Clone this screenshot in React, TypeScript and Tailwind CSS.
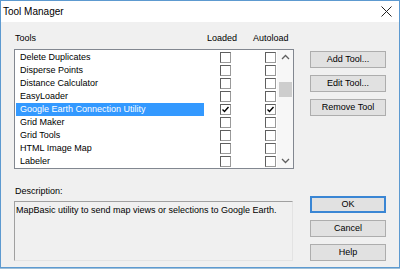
import React from "react"

// Lista de ferramentas do diálogo
const TOOLS = [
  { name: "Delete Duplicates", loaded: false, auto: false },
  { name: "Disperse Points", loaded: false, auto: false },
  { name: "Distance Calculator", loaded: false, auto: false },
  { name: "EasyLoader", loaded: false, auto: false },
  { name: "Google Earth Connection Utility", loaded: true, auto: true, selected: true },
  { name: "Grid Maker", loaded: false, auto: false },
  { name: "Grid Tools", loaded: false, auto: false },
  { name: "HTML Image Map", loaded: false, auto: false },
  { name: "Labeler", loaded: false, auto: false },
]

function CheckBox({ checked }: { checked: boolean }) {
  return (
    <div className="flex h-[11px] w-[11px] items-center justify-center border border-t-[#5f5f5f] border-l-[#5f5f5f] border-r-[#9a9a9a] border-b-[#9a9a9a] bg-white">
      {checked && (
        <svg width="9" height="9" viewBox="0 0 9 9" fill="none">
          <path d="M1.5 4.5 L3.5 6.5 L7.5 2" stroke="#000" strokeWidth="1.4" />
        </svg>
      )}
    </div>
  )
}

function Button({ label, primary }: { label: string; primary?: boolean }) {
  return (
    <div
      className={`flex h-[17px] w-[76px] items-center justify-center bg-[#e1e1e1] text-[9px] text-black ${
        primary ? "border-2 border-[#3a86d4]" : "border border-[#adadad]"
      }`}
    >
      {label}
    </div>
  )
}

export default function App() {
  return (
    <div
      className="h-[269px] w-[400px] bg-[#9fbfd8]"
      style={{ fontFamily: '"Liberation Sans", Arial, sans-serif' }}
    >
      <div className="flex h-[268px] w-[400px] flex-col border border-[#5d9ad0]">
        {/* Barra de título */}
        <div className="flex h-[21px] items-center justify-between bg-white pl-[2px] pr-[7px]">
          <span className="text-[10px] text-black">Tool Manager</span>
          <svg width="11" height="11" viewBox="0 0 11 11" fill="none">
            <path d="M0.5 0.5 L10.5 10.5 M10.5 0.5 L0.5 10.5" stroke="#222" strokeWidth="1" />
          </svg>
        </div>

        {/* Corpo */}
        <div className="flex flex-1 bg-[#f0f0f0] pl-[13px] text-[9px] text-black">
          <div className="flex w-[280px] flex-col">
            <div className="mt-[11px] flex h-[11px] items-center leading-[11px]">
              <span className="ml-[1px] w-[192px]">Tools</span>
              <span className="w-[46px]">Loaded</span>
              <span>Autoload</span>
            </div>

            {/* Lista */}
            <div className="mt-[5px] flex h-[120px] w-[280px] border border-[#828790] bg-white">
              <div className="flex flex-1 flex-col overflow-hidden pt-[1px]">
                {TOOLS.map((t) => (
                  <div key={t.name} className="flex h-[13px] shrink-0 items-center">
                    <div
                      className={`ml-[1px] flex h-[13px] w-[188px] items-center whitespace-nowrap pl-[4px] ${
                        t.selected ? "bg-[#3399ff] text-white" : ""
                      }`}
                    >
                      {t.name}
                    </div>
                    <div className="ml-[16px]">
                      <CheckBox checked={t.loaded} />
                    </div>
                    <div className="ml-[34px]">
                      <CheckBox checked={t.auto} />
                    </div>
                  </div>
                ))}
              </div>
              {/* Scrollbar */}
              <div className="flex w-[16px] flex-col items-center bg-[#f7f7f7]">
                <svg className="mt-[4px]" width="9" height="6" viewBox="0 0 9 6" fill="none">
                  <path d="M1 5 L4.5 1.5 L8 5" stroke="#606060" strokeWidth="1.3" />
                </svg>
                <div className="mt-[22px] h-[15px] w-[13px] bg-[#cdcdcd]" />
                <div className="flex-1" />
                <svg className="mb-[4px]" width="9" height="6" viewBox="0 0 9 6" fill="none">
                  <path d="M1 1 L4.5 4.5 L8 1" stroke="#606060" strokeWidth="1.3" />
                </svg>
              </div>
            </div>

            <div className="mt-[17px] h-[11px] pl-[1px] leading-[11px]">Description:</div>
            <div className="mt-[4px] h-[60px] w-[279px] border border-t-[#a0a0a0] border-l-[#a0a0a0] border-r-[#e3e3e3] border-b-[#e3e3e3] pl-[1px] pt-[3px] leading-[11px]">
              MapBasic utility to send map views or selections to Google Earth.
            </div>
          </div>

          {/* Botões */}
          <div className="ml-[16px] flex flex-col">
            <div className="mt-[29px] flex flex-col gap-[7px]">
              <Button label="Add Tool..." />
              <Button label="Edit Tool..." />
              <Button label="Remove Tool" />
            </div>
            <div className="mt-[80px] flex flex-col gap-[7px]">
              <Button label="OK" primary />
              <Button label="Cancel" />
              <Button label="Help" />
            </div>
          </div>
        </div>
      </div>
    </div>
  )
}
